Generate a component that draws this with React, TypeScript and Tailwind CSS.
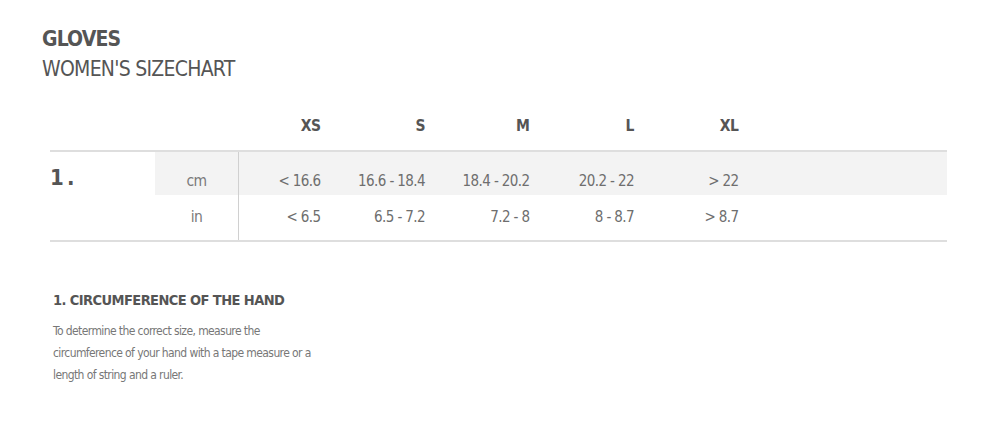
import React from "react";

const sizes = ["XS", "S", "M", "L", "XL"];
const cm = ["< 16.6", "16.6 - 18.4", "18.4 - 20.2", "20.2 - 22", "> 22"];
const inch = ["< 6.5", "6.5 - 7.2", "7.2 - 8", "8 - 8.7", "> 8.7"];

const font = { fontFamily: "'DejaVu Sans Condensed', 'Liberation Sans Narrow', Roboto, sans-serif" };

export default function App() {
  return (
    <div className="w-[995px] h-[429px] bg-white text-[#555]" style={font}>
      <div className="pl-[42px] pt-[24px]">
        <h1 className="text-[21px] leading-[30px] font-bold tracking-[-0.04em]">GLOVES</h1>
        <h2 className="text-[21px] leading-[30px] tracking-[-0.035em]">WOMEN'S SIZECHART</h2>
      </div>

      <div className="ml-[50px] w-[897px] mt-[16px]">
        <div className="grid grid-cols-[105px_83px_repeat(5,104.5px)_1fr] h-[50px] pt-[16px] text-[15.5px] leading-[20px] font-bold tracking-[-0.03em] text-[#555]">
          <div />
          <div />
          {sizes.map((s) => (
            <div key={s} className="text-right pr-[22px]">{s}</div>
          ))}
        </div>

        <div className="border-t-2 border-b-2 border-[#dedede] grid grid-cols-[105px_1fr]">
          <div className="pt-[11px] text-[22px] leading-[30px] font-bold tracking-[0.15em] text-[#555]">1.</div>
          <div>
            <div className="grid grid-cols-[83px_repeat(5,104.5px)_1fr] h-[43px] bg-[#f3f3f3] items-end text-[15px] leading-[20px] tracking-[-0.04em] text-[#6e6e6e] whitespace-nowrap">
              <div className="text-center text-[15.5px] text-[#7a7a7a] pb-[4px]">cm</div>
              {cm.map((v, i) => (
                <div key={i} className={`pr-[22px] pb-[4px] h-full flex items-end justify-end ${i === 0 ? "border-l border-[#d0d0d0]" : ""}`}>{v}</div>
              ))}
              <div />
            </div>
            <div className="grid grid-cols-[83px_repeat(5,104.5px)_1fr] h-[45px] text-[15px] leading-[20px] tracking-[-0.04em] text-[#6e6e6e] whitespace-nowrap">
              <div className="text-center text-[15.5px] text-[#7a7a7a] pt-[12px]">in</div>
              {inch.map((v, i) => (
                <div key={i} className={`text-right pr-[22px] pt-[12px] ${i === 0 ? "border-l border-[#d0d0d0]" : ""}`}>{v}</div>
              ))}
              <div />
            </div>
          </div>
        </div>
      </div>

      <div className="pl-[53px] mt-[47px]">
        <h3 className="text-[14.5px] leading-[22px] font-bold tracking-[-0.04em] text-[#555]">1. CIRCUMFERENCE OF THE HAND</h3>
        <p className="mt-[9px] text-[12px] leading-[22px] tracking-[-0.05em] text-[#777] whitespace-nowrap">
          To determine the correct size, measure the
          <br />
          circumference of your hand with a tape measure or a
          <br />
          length of string and a ruler.
        </p>
      </div>
    </div>
  );
}
